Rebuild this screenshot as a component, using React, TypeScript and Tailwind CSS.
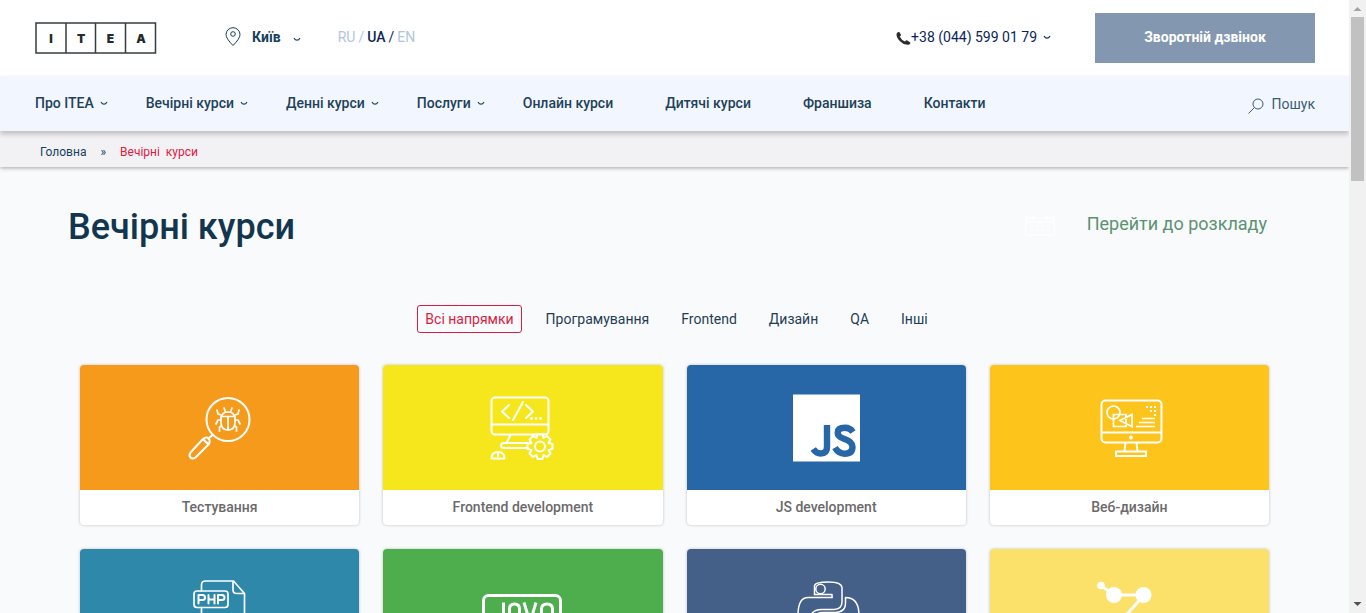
import React from "react";

type ArtProps = { children: React.ReactNode; shift?: number };

function Chevron() {
  return (
    <svg width="8" height="8" viewBox="0 0 8 8" fill="none" stroke="currentColor" strokeWidth="1.2" aria-hidden="true">
      <path d="M1 3q1.200 2.200 3 2.200T7 3" />
    </svg>
  );
}

function Logo() {
  return (
    <a href="#" aria-label="ITEA">
      <svg width="122" height="32" viewBox="0 0 122 32">
        <path
          d="M1 1h119.500v30H1zM31 1v30M60.500 1v30M90.500 1v30"
          fill="none"
          stroke="#363c3f"
          strokeWidth="1.500"
        />
        <g fontFamily="Inter, sans-serif" fontSize="12" fontWeight="900" fill="#23292c" textAnchor="middle">
          <text x="16" y="20.500">I</text>
          <text x="46" y="20.500">T</text>
          <text x="75.500" y="20.500">E</text>
          <text x="106" y="20.500">A</text>
        </g>
      </svg>
    </a>
  );
}

function Art({ children, shift = 0 }: ArtProps) {
  return (
    <svg
      width="100"
      height="125"
      viewBox={`${-shift} 0 100 125`}
      fill="none"
      stroke="#fff"
      strokeWidth="2"
      strokeLinecap="round"
      strokeLinejoin="round"
      aria-hidden="true"
    >
      {children}
    </svg>
  );
}

const bug = (
  <Art shift={-1}>
    <circle cx="59" cy="54.500" r="21.500" />
    <path d="M43.500 70l-4 3.500" />
    <path d="M33.500 74.500q3.500-3.500 6-1t0 6L26.500 92.500q-3 2-5 0t0-5zM34.500 74q2 4 5.500 5" />
    <g strokeWidth="1.700">
      <path d="M52 51.500h14v6q0 7.500-7 7.500t-7-7.500zM52.500 51.500q1-4.500 6.500-4.500t6.500 4.500M59 52v13" />
      <path d="M56.500 47l-1.500-4M61.500 47l1.500-4M52 50l-3-1-1-4M66 50l3-1 1-4M52 55h-3l-2 4M66 55h3l2 4M52.500 61l-2 1v4M65.500 61l2 1v4" />
    </g>
  </Art>
);

const frontend = (
  <Art shift={-2}>
    <rect x="20.500" y="32.500" width="57" height="37" rx="3.500" />
    <path d="M21 59.500h56M39.500 70l-4 8M57 78H33q-3 0-3 2.500t3 2.500h24" />
    <path d="M38 40l-7 6.500 7 6.500M52 37l-10 18M55 40l7 6.500-7 6.500" />
    <path d="M60.500 53.500h.01M65 53.500h.01M69.500 53.500h.01" strokeWidth="2.400" strokeLinecap="square" />
    <path d="M20.500 93.500q0-6.500 6.500-6.500t6.500 6.500zM27 88v3" />
    <circle cx="69" cy="81.500" r="5" />
    <path d="M66.500 69h5l1 4 3.500-2 3.500 3.500-2 3.500 4 1v5l-4 1 2 3.500-3.500 3.500-3.500-2-1 4h-5l-1-4-3.500 2-3.500-3.500 2-3.500-4-1v-5l4-1-2-3.500 3.500-3.500 3.500 2z" />
  </Art>
);

const javascript = (
  <Art shift={1}>
    <rect x="16" y="29.500" width="67" height="67" fill="#fff" stroke="none" />
    <g stroke="#2767a8" strokeWidth="6.400" strokeLinecap="butt" strokeLinejoin="miter">
      <path d="M50 60v22q0 6.500-6.300 6.500-4.500 0-7.500-4.500" />
      <path d="M76 67q-3-4.200-8-4.200-7.300 0-7.300 4.900 0 4 6.800 6.300 8 2.800 8 7.700 0 7-8 7-6 0-9.500-6" />
    </g>
  </Art>
);

const webDesign = (
  <Art shift={2}>
    <rect x="20.500" y="35.500" width="60" height="42" rx="4" />
    <path d="M21 67.500h59" />
    <circle cx="50" cy="72.500" r="1.600" fill="#fff" strokeWidth="1" />
    <path d="M44.500 78l-1 8M55.500 78l1 8M35 86.500h30v4.500H35z" strokeLinejoin="miter" />
    <g strokeWidth="1.700" strokeLinecap="butt" strokeLinejoin="miter">
      <circle cx="32.500" cy="47.500" r="6.500" />
      <path d="M32.500 49.500h12.500v12h-12.500zM51 49.500v12l-12-6z" />
      <path d="M61 53.500h13M58 57.500h16M55 61.500h19" />
      <path d="M65 42h2M69 42h2M73 42h2M69 46h2M73 46h2M73 50h2" strokeWidth="2" />
    </g>
  </Art>
);

const php = (
  <Art shift={6}>
    <g strokeWidth="1.700">
      <path d="M25.500 42v-6q0-4 4-4h28l11 12.500v70H25.500V59M57 32v9q0 3.500 4 3.500h7" />
      <rect x="18" y="42" width="34" height="16.500" rx="3" />
      <path d="M22.500 54.500v-8.500h4q2.500 0 2.500 2.500t-2.500 2.500h-4M32.500 46v8.500M38.500 46v8.500M32.500 50.500h6M42 54.500v-8.500h4q2.500 0 2.500 2.500t-2.500 2.500h-4" strokeWidth="2" />
    </g>
  </Art>
);

const java = (
  <Art shift={-1}>
    <rect x="11.500" y="46.500" width="77" height="42" rx="5" strokeWidth="3" />
    <g strokeWidth="3" strokeLinecap="butt">
      <path d="M31.500 53.500v16q0 4-7 4M37.500 74v-14q0-5 5-5t5 5v14M37.500 67h10M52 53.500l6 20 6-20M69.500 74v-14q0-5 5.500-5t5.500 5v14M69.500 67h11" />
    </g>
  </Art>
);

const python = (
  <Art>
    <g strokeWidth="1.500">
      <path d="M56 48.500H32q-10 0-10 18 0 17 9 17h6M38.500 45.500V37q0-4 14-4 13.500 0 13.500 6v14q0 7-8 7.500H46q-8 0-11 5" />
      <path d="M69.500 48.500q13.500 0 13.500 18 0 17-9 17H52M69.500 48.500v6q0 8.500-10 9H47q-7 0-9 5" />
      <circle cx="44.500" cy="40" r="4.700" />
      <path d="M38.500 45.500H56v3" />
    </g>
  </Art>
);

const network = (
  <Art shift={1}>
    <path d="M21 36.500l13 9.500h30L42 71" strokeWidth="3" />
    <g fill="#fff" stroke="none">
      <circle cx="21" cy="36.500" r="3.800" />
      <circle cx="34" cy="46" r="8" />
      <circle cx="63.500" cy="46" r="8" />
      <circle cx="41" cy="72" r="8" />
    </g>
  </Art>
);

const courses = [
  { id: "testing", title: "Тестування", color: "bg-[#f69a1b]", art: bug },
  { id: "frontend", title: "Frontend development", color: "bg-[#f5e71b]", art: frontend },
  { id: "js", title: "JS development", color: "bg-[#2767a8]", art: javascript },
  { id: "web", title: "Веб-дизайн", color: "bg-[#fdc41b]", art: webDesign },
  { id: "php", title: "", color: "bg-[#2e88aa]", art: php },
  { id: "java", title: "", color: "bg-[#4eae4e]", art: java },
  { id: "python", title: "", color: "bg-[#446088]", art: python },
  { id: "network", title: "", color: "bg-[#fbe069]", art: network },
];

const menu = [
  { label: "Про ITEA", expandable: true, gap: "mr-[38px]" },
  { label: "Вечірні курси", expandable: true, gap: "mr-[38px]" },
  { label: "Денні курси", expandable: true, gap: "mr-[38px]" },
  { label: "Послуги", expandable: true, gap: "mr-[38px]" },
  { label: "Онлайн курси", expandable: false, gap: "mr-[52px]" },
  { label: "Дитячі курси", expandable: false, gap: "mr-[52px]" },
  { label: "Франшиза", expandable: false, gap: "mr-[52px]" },
  { label: "Контакти", expandable: false, gap: "" },
];

const filters = ["Всі напрямки", "Програмування", "Frontend", "Дизайн", "QA", "Інші"];

function TopBar() {
  return (
    <header className="flex h-[76px] shrink-0 items-center bg-white pl-[35px] pr-[34px] text-sm">
      <Logo />
      <button type="button" className="ml-[68px] flex items-center pb-0.5 font-bold text-[#17405a]">
        <svg width="16" height="20" viewBox="0 0 16 20" fill="none" stroke="currentColor" strokeWidth="1" className="mr-[11px]" aria-hidden="true">
          <path d="M8 18.500Q1 11.500 1 7.500a7 6.800 0 0 1 14 0Q15 11.500 8 18.500z" />
          <circle cx="8" cy="7" r="2.300" />
        </svg>
        Київ
        <span className="ml-3 mt-1"><Chevron /></span>
      </button>
      <div className="ml-9 flex gap-[3px] pb-0.5 pl-px text-[#b3c5dd]">
        <a href="#">RU</a>
        <span>/</span>
        <a href="#" className="font-medium text-[#0e2654]">UA</a>
        <span className="text-[#0e2654]">/</span>
        <a href="#">EN</a>
      </div>
      <button type="button" className="ml-auto flex items-center pb-0.5 text-[#0a2558]">
        <svg width="15" height="15" viewBox="0 0 15 15" fill="#2d2d2d" className="mt-0.5" aria-hidden="true">
          <path d="M.8 2.200Q2 .6 3.300 1l1.700 2.800q.2 1-1.300 1.700 1.700 3.500 5.300 5 1.300-1.500 2.300-1.100l2.700 1.800q.9.900-.7 2.400Q8.500 14.800 4 10.200T.8 2.200z" />
        </svg>
        +38 (044) 599 01 79
        <span className="ml-1.5"><Chevron /></span>
      </button>
      <button type="button" className="ml-11 h-[50px] w-[220px] bg-[#8497b0] pb-0.5 font-bold text-white">
        Зворотній дзвінок
      </button>
    </header>
  );
}

function MainNav() {
  return (
    <nav className="relative z-20 flex h-[55px] shrink-0 items-center bg-[#f2f7ff] pb-0.5 pl-[35px] pr-[34px] text-sm font-medium text-[#1f4159] shadow-[0_3px_5px_rgba(0,0,0,0.22)]">
      {menu.map((item) => (
        <a key={item.label} href="#" className={`flex items-center gap-1.5 whitespace-nowrap ${item.gap}`}>
          {item.label}
          {item.expandable && <Chevron />}
        </a>
      ))}
      <button type="button" className="ml-auto flex items-center gap-2 pt-0.5 font-normal text-[#3b5b70]">
        <svg width="16" height="16" viewBox="0 0 16 16" fill="none" stroke="currentColor" strokeWidth="1" className="mt-1" aria-hidden="true">
          <circle cx="10" cy="6" r="5" />
          <path d="M6.500 9.500L.5 15.500" />
        </svg>
        Пошук
      </button>
    </nav>
  );
}

function Breadcrumbs() {
  return (
    <div className="relative z-10 flex h-9 shrink-0 items-center gap-3.5 bg-[#f2f2f4] pl-10 pt-1.5 text-xs text-[#17405a] shadow-[0_1px_4px_rgba(0,0,0,0.35)]">
      <a href="#">Головна</a>
      <span>»</span>
      <span className="whitespace-pre text-[#e01a43]">Вечірні  курси</span>
    </div>
  );
}

function ScrollBar() {
  return (
    <div aria-hidden="true" className="flex w-[17px] shrink-0 flex-col items-center bg-[#f1f1f1]">
      <svg width="17" height="17" viewBox="0 0 17 17" fill="#a3a3a3"><path d="M4.500 11L8.500 7l4 4z" /></svg>
      <div className="h-[164px] w-[13px] bg-[#c1c1c1]" />
      <svg width="17" height="17" viewBox="0 0 17 17" fill="#505050" className="mt-auto"><path d="M4.500 6l4 4 4-4z" /></svg>
    </div>
  );
}

export default function App() {
  return (
    <div className="flex h-screen overflow-hidden bg-[#f9fafc] font-['Roboto',sans-serif]">
      <div className="flex min-w-0 flex-1 flex-col overflow-hidden">
        <TopBar />
        <MainNav />
        <Breadcrumbs />
        <main>
          <div className="flex items-start justify-between pl-[68px] pr-[82px] pt-9">
            <h1 className="text-4xl font-medium leading-[48px] text-[#12364f]">Вечірні курси</h1>
            <a href="#" className="flex items-center gap-8 pt-[7px] text-lg text-[#5c9271]">
              <svg width="30" height="20" viewBox="0 0 30 20" fill="none" stroke="#fdfefe" strokeWidth="1.500" className="mt-1" aria-hidden="true">
                <path d="M1 2h28v17H1zM1 6h28M8 0v4M22 0v4" />
                <path d="M6 10h19M6 14h19" strokeDasharray="3 2" />
              </svg>
              Перейти до розкладу
            </a>
          </div>
          <div className="mt-[54px] flex items-center justify-center gap-4 pl-1 text-sm text-[#1f3e55]">
            {filters.map((filter, index) => (
              <button
                key={filter}
                type="button"
                className={
                  index === 0
                    ? "h-7 rounded-[3px] border border-[#d91e43] px-[7px] text-[#d91e43]"
                    : "h-7 rounded-[3px] border border-transparent px-[7px]"
                }
              >
                {filter}
              </button>
            ))}
          </div>
          <div className="mt-8 grid grid-cols-4 gap-6 px-20">
            {courses.map((course) => (
              <a
                key={course.id}
                href="#"
                className="overflow-hidden rounded bg-white text-center shadow-[0_0_3px_rgba(0,0,0,0.25)]"
              >
                <div className={`flex h-[125px] justify-center ${course.color}`}>{course.art}</div>
                <div className="h-[35px] text-sm font-medium leading-[35px] text-[#6a6a6a]">{course.title}</div>
              </a>
            ))}
          </div>
        </main>
      </div>
      <ScrollBar />
    </div>
  );
}
